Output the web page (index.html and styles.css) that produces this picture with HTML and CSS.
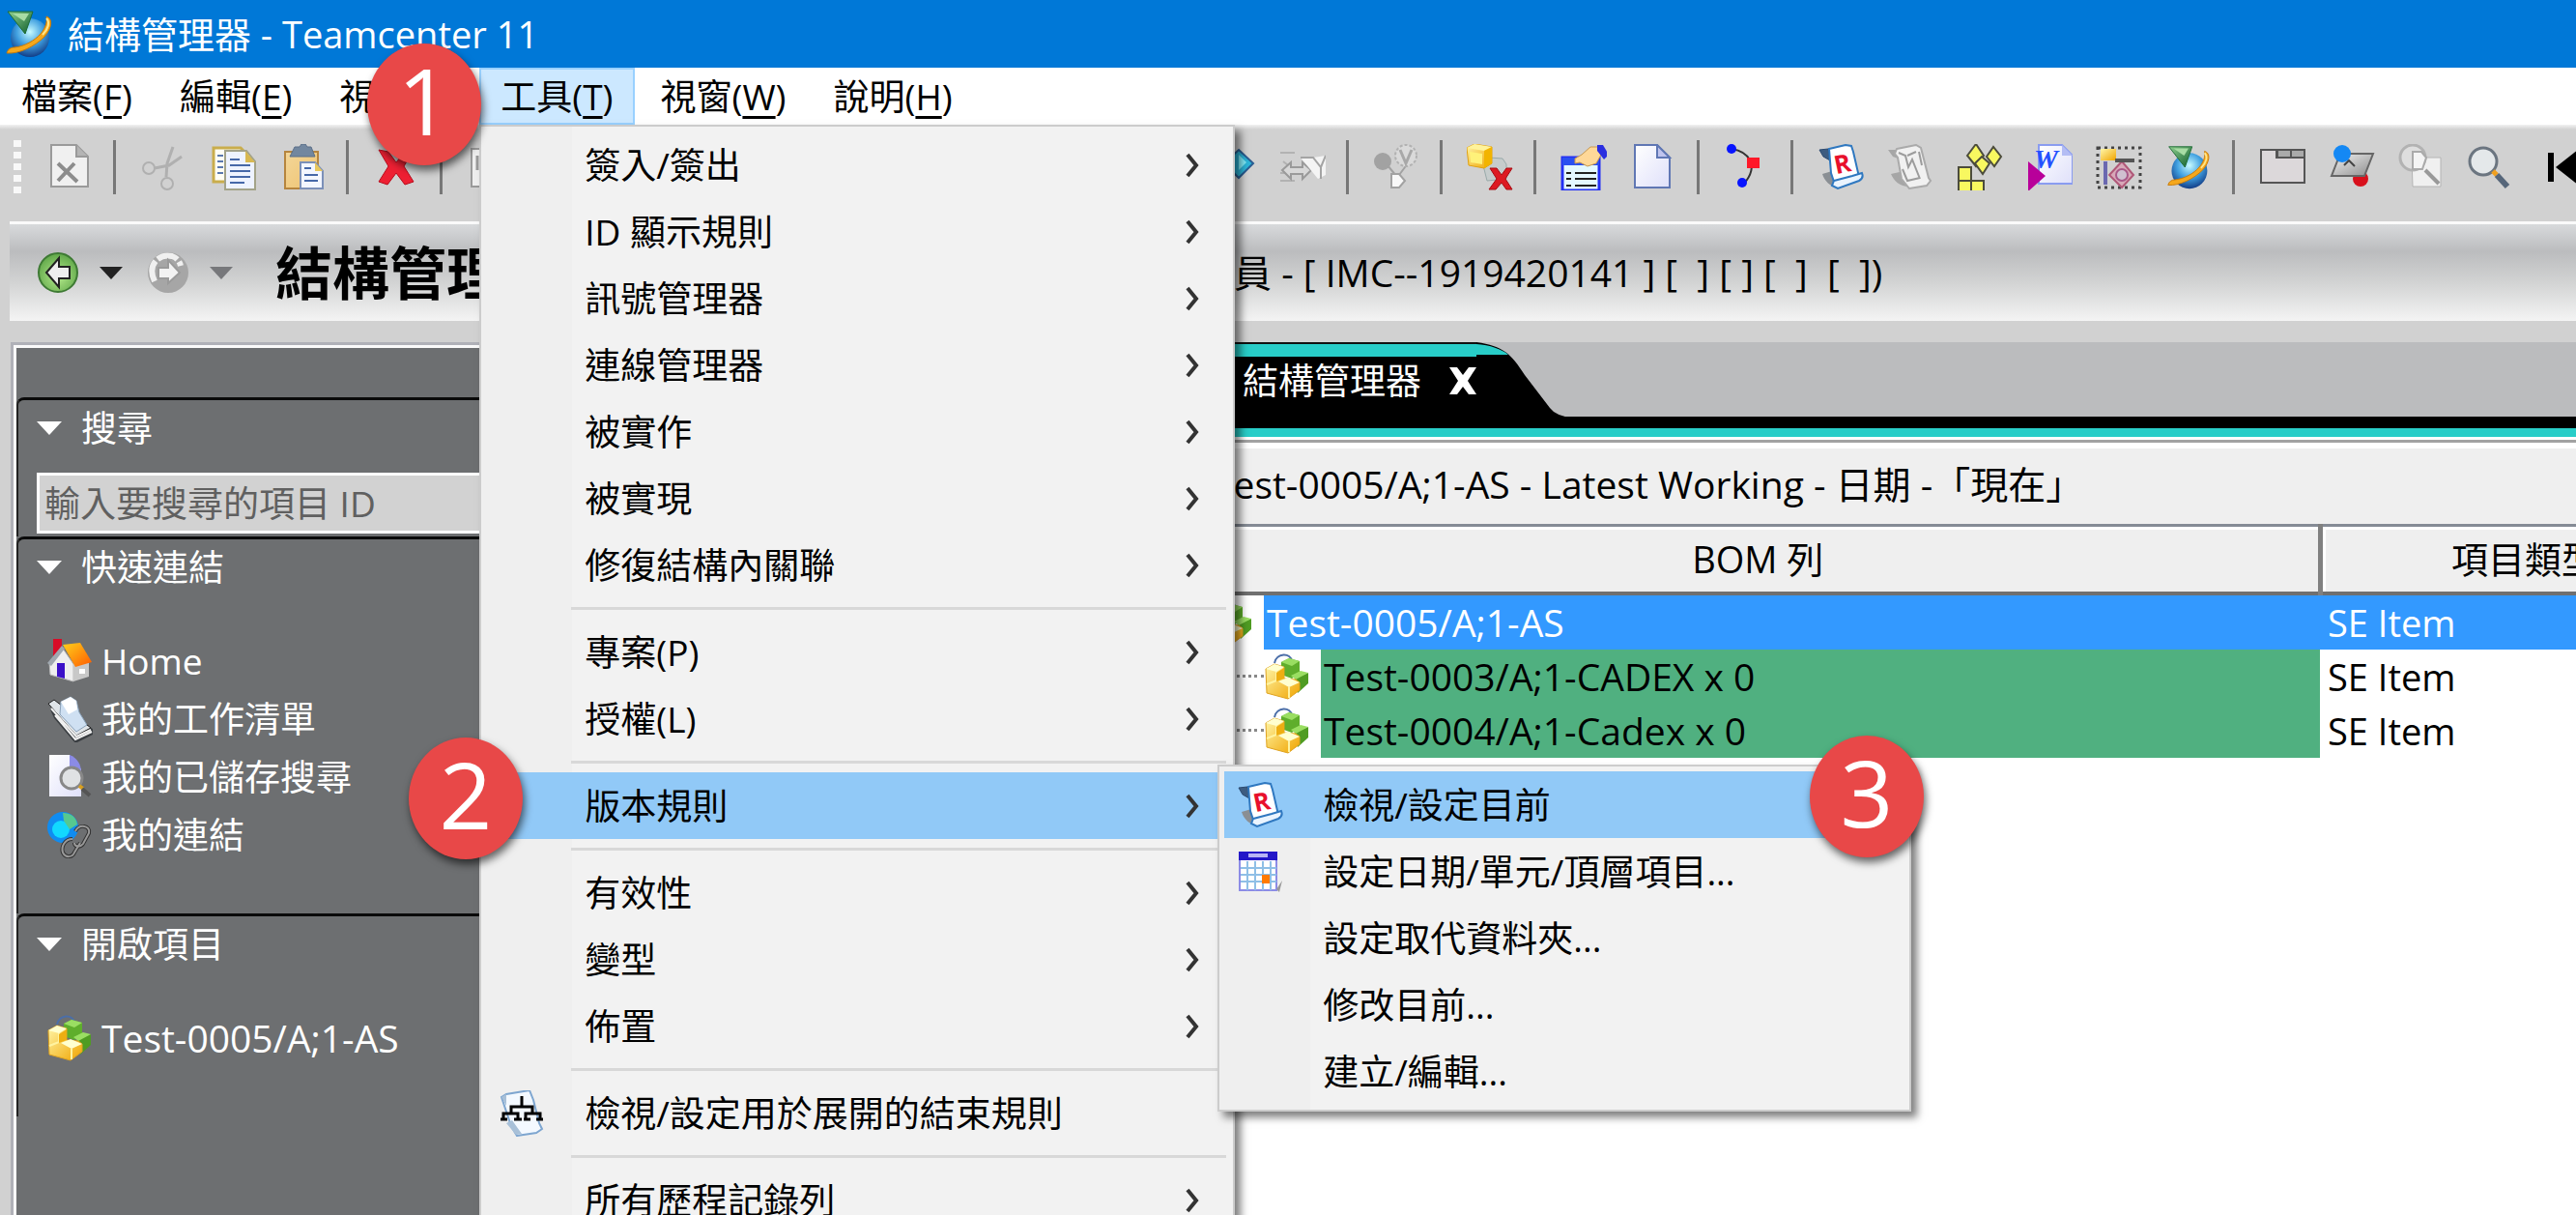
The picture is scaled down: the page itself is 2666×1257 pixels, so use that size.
FILE: index.html
```html
<!DOCTYPE html>
<html lang="zh-Hant">
<head>
  <meta charset="UTF-8">
  <meta name="viewport" content="width=device-width, initial-scale=1.0">
  <title>結構管理器 - Teamcenter 11</title>
  <link rel="stylesheet" href="styles.css">
</head>
<body>

  <!-- Shared icons -->
  <svg class="sprite" aria-hidden="true">
    <defs>
      <linearGradient id="gold" x1="0" y1="0" x2="1" y2="1">
        <stop offset="0" stop-color="#fff6a8"/>
        <stop offset="1" stop-color="#f0a400"/>
      </linearGradient>
      <linearGradient id="paper" x1="0" y1="0" x2="1" y2="1">
        <stop offset="0" stop-color="#ffffff"/>
        <stop offset="1" stop-color="#dfe0fa"/>
      </linearGradient>
      <linearGradient id="steel" x1="0" y1="0" x2="1" y2="1">
        <stop offset="0" stop-color="#f4f4f4"/>
        <stop offset="1" stop-color="#8c8c8c"/>
      </linearGradient>
      <linearGradient id="leaf" x1="0" y1="0" x2="1" y2="1">
        <stop offset="0" stop-color="#8fd08f"/>
        <stop offset="1" stop-color="#0d5c2a"/>
      </linearGradient>
      <linearGradient id="roof" x1="0" y1="0" x2="1" y2="1">
        <stop offset="0" stop-color="#ffd21c"/>
        <stop offset="1" stop-color="#ff5a00"/>
      </linearGradient>
      <radialGradient id="globe" cx="0.5" cy="0.35" r="0.7">
        <stop offset="0" stop-color="#c8fbff"/>
        <stop offset="0.5" stop-color="#3f9fe0"/>
        <stop offset="1" stop-color="#0b2d78"/>
      </radialGradient>
      <radialGradient id="green" cx="0.5" cy="0.6" r="0.6">
        <stop offset="0" stop-color="#b4ea8c"/>
        <stop offset="1" stop-color="#5fa648"/>
      </radialGradient>
    </defs>

    <symbol id="logo" viewBox="0 0 52 52">
      <circle cx="27" cy="30" r="20" fill="url(#globe)"/>
      <path d="M44 8c7 2 6 12-2 21C32 39 16 47 3 46c1-4 4-6 8-6 10-1 21-7 27-14 5-6 7-12 6-18z" fill="#f5a81c" stroke="#c87a08"/>
      <path d="M44 10c4 4 2 11-4 17" fill="none" stroke="#ffe68a" stroke-width="2"/>
      <path d="M4 3h26l-8 23z" fill="url(#leaf)" stroke="#1c6b34"/>
      <path d="M9 5h17l-5 8z" fill="#a8dca4"/>
    </symbol>

    <symbol id="rule" viewBox="0 0 48 48">
      <path d="M5 31l10-3 7 18c-9-2-15-8-17-15z" fill="#8a8f94"/>
      <path d="M2 6l9-1 2 12-7-4z" fill="#3d5c80" stroke="#2b4a70"/>
      <path d="M12 5l17-4 6 1 2 6 6 26-25 8-4-12z" fill="#fff" stroke="#2f78c0" stroke-width="2"/>
      <path d="M17 38l19-5 10-3c2 5-1 7-3 8l-22 8-6-3z" fill="#eaf4ff" stroke="#2f78c0" stroke-width="2"/>
      <text x="17" y="30" class="rule-letter" transform="rotate(-12 24 20)">R</text>
    </symbol>

    <symbol id="assembly" viewBox="0 0 48 48">
      <path d="M11 10c2-11 17-11 18-2" fill="none" stroke="#4b6ea8" stroke-width="2"/>
      <path d="M18 9l8-4 11 3v12l-8 6-11-4z" fill="#5fae2c"/>
      <path d="M18 9l8-4 11 3-8 5z" fill="#9ade62"/>
      <path d="M32 26l14-6v11l-11 10z" fill="#4f9c22"/>
      <path d="M28 23l10-5 8 2-13 7z" fill="#9ade62"/>
      <path d="M2 16l9-5 10 3v12l12 1 4 3v8l-12 9-22-6z" fill="url(#gold)" stroke="#dfa320"/>
      <path d="M2 16l9-5 10 3-8 5zM15 29l10-4 12 5-11 5z" fill="#ffffcf"/>
      <path d="M13 19v9l-10 4M26 35v11" fill="none" stroke="#fff3a0" stroke-width="2"/>
      <path d="M21 15v11l-8 3v-9z" fill="#eeae12"/>
    </symbol>

    <symbol id="arrow" viewBox="0 0 20 28">
      <path d="M4 3l9 11-9 11" fill="none" stroke="#333" stroke-width="4"/>
    </symbol>
  </svg>

  <header class="title-bar">
    <svg class="logo"><use href="#logo"/></svg>
    <span>結構管理器 - Teamcenter 11</span>
  </header>

  <nav class="menu-bar">
    <button type="button" class="menu-button">檔案(<u>F</u>)</button>
    <button type="button" class="menu-button">編輯(<u>E</u>)</button>
    <button type="button" class="menu-button">視圖(<u>V</u>)</button>
    <div class="menu-holder">
      <button type="button" class="menu-button open">工具(<u>T</u>)</button>
      <div class="menu tools-menu">
        <button type="button" class="item">簽入/簽出<svg class="arrow"><use href="#arrow"/></svg></button>
        <button type="button" class="item">ID 顯示規則<svg class="arrow"><use href="#arrow"/></svg></button>
        <button type="button" class="item">訊號管理器<svg class="arrow"><use href="#arrow"/></svg></button>
        <button type="button" class="item">連線管理器<svg class="arrow"><use href="#arrow"/></svg></button>
        <button type="button" class="item">被實作<svg class="arrow"><use href="#arrow"/></svg></button>
        <button type="button" class="item">被實現<svg class="arrow"><use href="#arrow"/></svg></button>
        <button type="button" class="item">修復結構內關聯<svg class="arrow"><use href="#arrow"/></svg></button>
        <hr>
        <button type="button" class="item">專案(P)<svg class="arrow"><use href="#arrow"/></svg></button>
        <button type="button" class="item">授權(L)<svg class="arrow"><use href="#arrow"/></svg></button>
        <hr>
        <div class="item-holder">
          <button type="button" class="item selected">版本規則<svg class="arrow"><use href="#arrow"/></svg></button>
          <div class="menu sub-menu">
            <button type="button" class="item selected"><svg class="item-icon"><use href="#rule"/></svg>檢視/設定目前</button>
            <button type="button" class="item">
              <svg class="item-icon" viewBox="0 0 48 48">
                <rect x="3" y="4" width="38" height="39" fill="#fff" stroke="#8c8ce6" stroke-width="2"/>
                <path d="M2 3h40v9H2z" fill="#2418c8"/>
                <path d="M12 5h20v4H12z" fill="#b8b4f4"/>
                <path d="M11 13v30M19 13v30M27 13v30M35 13v30M4 20h37M4 27h37M4 34h37" stroke="#8fbfe6" stroke-width="2"/>
                <path d="M26 27h8v9h-8z" fill="#ff7a00"/>
                <path d="M41 42l6-9-3 12z" fill="#999"/>
              </svg>設定日期/單元/頂層項目...</button>
            <button type="button" class="item">設定取代資料夾...</button>
            <button type="button" class="item">修改目前...</button>
            <button type="button" class="item">建立/編輯...</button>
          </div>
        </div>
        <hr>
        <button type="button" class="item">有效性<svg class="arrow"><use href="#arrow"/></svg></button>
        <button type="button" class="item">變型<svg class="arrow"><use href="#arrow"/></svg></button>
        <button type="button" class="item">佈置<svg class="arrow"><use href="#arrow"/></svg></button>
        <hr>
        <button type="button" class="item">
          <svg class="item-icon" viewBox="0 0 48 48">
            <path d="M3 7l5-3 24-4 4 10 6 24 3 6-6 4-20 3-6-10z" fill="#f4f9ff" stroke="#7ea6d0" stroke-width="2"/>
            <path d="M3 7l5-3v12zM8 34l10 12 6-1-10-14z" fill="#a8c0d8"/>
            <path d="M24 6v10M13 24v-7h22v7M5 31v-7h15v7M28 31v-7h15v7" fill="none" stroke="#000" stroke-width="3"/>
            <path d="M2 30h7M16 30h8M26 30h7M39 30h7" stroke="#000" stroke-width="3"/>
          </svg>檢視/設定用於展開的結束規則</button>
        <hr>
        <button type="button" class="item">所有歷程記錄列<svg class="arrow"><use href="#arrow"/></svg></button>
      </div>
    </div>
    <button type="button" class="menu-button">視窗(<u>W</u>)</button>
    <button type="button" class="menu-button">說明(<u>H</u>)</button>
  </nav>

  <div class="toolbar split">
    <div class="tools">
      <span class="grip"></span>
      <button type="button" class="tool" aria-label="關閉">
        <svg viewBox="0 0 48 48"><path d="M5 1h26l12 12v31H5z" fill="#f0f0f0" stroke="#9a9a9a" stroke-width="2"/><path d="M31 1v12h12" fill="#b4b4b4" stroke="#9a9a9a" stroke-width="2"/><path d="M12 20l20 19M29 20L12 38" stroke="#8c8c8c" stroke-width="4"/></svg>
      </button>
      <span class="divider"></span>
      <button type="button" class="tool" aria-label="剪下">
        <svg viewBox="0 0 48 48" fill="none" stroke="#b0b0b0"><circle cx="9" cy="25" r="6" stroke-width="2"/><circle cx="28" cy="41" r="6" stroke-width="2"/><path d="M15 25l15-3 13-9M27 34l1-14 6-17" stroke-width="3"/></svg>
      </button>
      <button type="button" class="tool" aria-label="複製">
        <svg viewBox="0 0 48 48"><path d="M4 4h28l4 4v31H4z" fill="#fffef4" stroke="#c9ad4c" stroke-width="3"/><path d="M8 12h6M8 18h6M8 24h6M8 30h6" stroke="#5a78ae" stroke-width="2"/><path d="M16 7h22l9 11v29H16z" fill="#eef3ff" stroke="#a3a389" stroke-width="2"/><path d="M37 7v12h10z" fill="#d8b850"/><path d="M21 16h10M21 22h21M21 28h21M21 34h21M21 40h15" stroke="#4668a8" stroke-width="2"/></svg>
      </button>
      <button type="button" class="tool" aria-label="貼上">
        <svg viewBox="0 0 48 48"><path d="M6 8h34v38H6z" fill="url(#gold)" opacity="0.6"/><path d="M6 8h34v38H6z" fill="#f6cb84" fill-opacity="0.6" stroke="#b6853e" stroke-width="2"/><path d="M11 13l5-10h5l2-3h4l2 3h4l4 10z" fill="#72879f" stroke="#5b6f88"/><path d="M22 19h15l8 9v18H22z" fill="#f3f6ff" stroke="#7c90b8" stroke-width="2"/><path d="M37 19v9h8z" fill="#e9c75c"/><path d="M26 25h7M26 32h14M26 38h14" stroke="#4668a8" stroke-width="2"/></svg>
      </button>
      <span class="divider"></span>
      <button type="button" class="tool" aria-label="刪除">
        <svg viewBox="0 0 48 48"><path d="M6 6l10 2 8 11 9-11 9-2-10 17 10 16-9 3-9-12-9 12-9-3 10-16z" fill="#ee2033" stroke="#b80c1c"/></svg>
      </button>
      <span class="divider"></span>
      <button type="button" class="tool" aria-label="新增">
        <svg viewBox="0 0 48 48"><path d="M5 5h26l10 10v29H5z" fill="#efefef" stroke="#9a9a9a" stroke-width="2"/><path d="M11 12v15" stroke="#9a9a9a" stroke-width="3"/></svg>
      </button>
    </div>
    <div class="tools">
      <button type="button" class="tool" aria-label="前往">
        <svg viewBox="0 0 48 48"><path d="M30 6l15 14-15 15-15-15z" fill="#2cb4d8" stroke="#2a5d92" stroke-width="2"/><path d="M30 11l8 8-8 8z" fill="#7fe9f7"/></svg>
      </button>
      <button type="button" class="tool" aria-label="傳送">
        <svg viewBox="0 0 48 48"><path d="M1 9h15M1 38h15M4 18l5 4M1 30h5" stroke="#b2b2b2" stroke-width="2"/><path d="M3 27l9-8v5h12v-5l9 8-9 9v-5H12v5z" fill="#d8d8d8" stroke="#9a9a9a" stroke-width="2"/><path d="M22 14h13l13-2v20l-8 4z" fill="#f4f4f4"/><path d="M22 14h13l8 10 5-12M43 24v12" fill="none" stroke="#a4a4a4" stroke-width="2"/></svg>
      </button>
      <span class="divider"></span>
      <button type="button" class="tool" aria-label="變型條件">
        <svg viewBox="0 0 48 48"><circle cx="10" cy="18" r="9" fill="#a2a2a2"/><path d="M15 22l9 11M36 20l-9 12" stroke="#a2a2a2" stroke-width="2"/><circle cx="34" cy="12" r="11" fill="#dadada" stroke="#b2b2b2" stroke-width="2" stroke-dasharray="3 2"/><path d="M28 6l6 14 6-14" fill="none" stroke="#a8a8a8" stroke-width="3"/><path d="M19 31h8l6 7-6 7h-8z" fill="#f8f8f8" stroke="#a2a2a2" stroke-width="2"/></svg>
      </button>
      <span class="divider"></span>
      <button type="button" class="tool" aria-label="移除項目">
        <svg viewBox="0 0 48 48"><path d="M17 22l6-8 14 1 4 6v15l-20 2z" fill="#c6cccc" stroke="#9aa"/><path d="M0 4l8-4 18 3v17l-8 5L2 22z" fill="url(#gold)" stroke="#e0a010"/><path d="M0 4l8-4 18 3-8 4z" fill="#fff39a"/><path d="M3 8l13 2v11L4 19z" fill="#fff27a"/><path d="M18 7v18l8-5V3z" fill="#f2b400"/><path d="M24 25h7l5 7 5-7h6l-7 11 7 11h-6l-5-7-6 7h-7l8-11z" fill="#dd1a22" stroke="#a80c12"/></svg>
      </button>
      <span class="divider"></span>
      <button type="button" class="tool" aria-label="內容">
        <svg viewBox="0 0 48 48"><path d="M2 14h38v34H2z" fill="#e4f8ff" stroke="#2430f4" stroke-width="3"/><path d="M2 14h38v8H2z" fill="#2a50f0"/><path d="M6 30h5M6 36h5M6 43h5M15 30h22M15 36h22M15 43h22" stroke="#222" stroke-width="2"/><path d="M15 15l7-4 9-8h8l3 8-5 9-9 3-8-4-5 1z" fill="#ffd898" stroke="#c89850"/><path d="M38 1h6l6 10-5 5-7-9z" fill="#2a2ee0"/></svg>
      </button>
      <button type="button" class="tool" aria-label="新文件">
        <svg viewBox="0 0 48 48"><path d="M5 1h23l13 13v31H5z" fill="url(#paper)" stroke="#6077b4" stroke-width="2"/><path d="M28 1v13h13z" fill="#c0c4ee" stroke="#6077b4" stroke-width="2"/></svg>
      </button>
      <span class="divider"></span>
      <button type="button" class="tool" aria-label="路徑">
        <svg viewBox="0 0 48 48"><path d="M8 5c18 3 29 17 13 36" fill="none" stroke="#333" stroke-width="2"/><circle cx="8" cy="5" r="5" fill="#0814ff"/><circle cx="19" cy="40" r="5" fill="#0814ff"/><path d="M24 14h13v11H24z" fill="#ff1828"/></svg>
      </button>
      <span class="divider"></span>
      <button type="button" class="tool" aria-label="版本規則"><svg><use href="#rule"/></svg></button>
      <button type="button" class="tool" aria-label="清除規則">
        <svg viewBox="0 0 48 48"><path d="M4 31l9-2 10 15c-10 0-16-6-19-13zM1 6h9l4 10-8-3z" fill="#a6a6a6"/><path d="M10 5l20-4 5 3 8 31 2 3-4 5-18 3-8-10-4-22-3-4z" fill="#f1f1f1" stroke="#aaa" stroke-width="2"/><path d="M12 9l7 3 3 12 4-8 8 20M30 8l-9 4M33 8l3 14M16 26l5 12 13-3" fill="none" stroke="#9c9c9c" stroke-width="2"/></svg>
      </button>
      <button type="button" class="tool" aria-label="封裝">
        <svg viewBox="0 0 48 48" fill="#f8f860" stroke="#4c4c3c" stroke-width="2"><path d="M11 12l9-12 8 12-8 11z"/><path d="M31 13l7-10 8 10-7 10z"/><path d="M19 20l7-7 8 7-7 11z"/><path d="M2 24h13v14H2zM2 38h13v11H2zM15 38h13v11H15z"/></svg>
      </button>
      <button type="button" class="tool" aria-label="匯出至 Word">
        <svg viewBox="0 0 48 48"><path d="M13 1h24l11 11v29H13z" fill="url(#paper)" stroke="#8a9cf0" stroke-width="2"/><path d="M37 1v11h11z" fill="#b4bdf4"/><text x="8" y="25" class="word-letter">W</text><path d="M2 18l18 15L2 49z" fill="#b8009a"/></svg>
      </button>
      <button type="button" class="tool" aria-label="選取範圍">
        <svg viewBox="0 0 48 48"><path d="M2 4h44v41H2z" fill="none" stroke="#444" stroke-width="3" stroke-dasharray="3 4"/><path d="M10 18v24" stroke="#6a68b0" stroke-width="4"/><path d="M27 18l12 14-12 13-13-13z" fill="#d8a8b8" stroke="#b05878" stroke-width="2"/><circle cx="27" cy="32" r="6" fill="#d0c0d0" stroke="#a85888" stroke-width="2"/><path d="M5 5h16v12H5z" fill="url(#gold)"/><path d="M20 17h20" stroke="#555" stroke-width="4"/></svg>
      </button>
      <button type="button" class="tool" aria-label="Teamcenter"><svg><use href="#logo"/></svg></button>
      <span class="divider"></span>
      <button type="button" class="tool" aria-label="資料夾">
        <svg viewBox="0 0 48 48"><path d="M2 6h16v8h29v26H2z" fill="#dcd8da" stroke="#555" stroke-width="2"/><path d="M19 6h28v8H19zM33 6v8" fill="#aaa" stroke="#555" stroke-width="2"/></svg>
      </button>
      <button type="button" class="tool" aria-label="平面">
        <svg viewBox="0 0 48 48"><circle cx="33" cy="36" r="8" fill="#d8101c"/><path d="M12 10h34l-9 23H3z" fill="url(#steel)" stroke="#666" stroke-width="2"/><path d="M16 22l5-5 6 6" fill="none" stroke="#444" stroke-width="2"/><circle cx="14" cy="10" r="9" fill="#1488f4"/></svg>
      </button>
      <button type="button" class="tool" aria-label="尋找元件">
        <svg viewBox="0 0 48 48"><path d="M14 14h30v30H15z" fill="#f0f0f0" stroke="#b4b4b4"/><circle cx="15" cy="14" r="13" fill="#dedede" stroke="#b2b2b2" stroke-width="3"/><path d="M15 8h9l5 6-4 12H15z" fill="#f4f4f4" stroke="#aaa" stroke-width="2"/><path d="M28 27l14 14" stroke="#999" stroke-width="4"/></svg>
      </button>
      <button type="button" class="tool" aria-label="尋找">
        <svg viewBox="0 0 48 48"><circle cx="16" cy="18" r="14" fill="#e4e8ea" stroke="#6b7580" stroke-width="3"/><path d="M26 28l4 4" stroke="#f0a020" stroke-width="5"/><path d="M30 32l11 12" stroke="#56667a" stroke-width="6"/></svg>
      </button>
      <button type="button" class="tool" aria-label="第一個">
        <svg viewBox="0 0 48 48"><path d="M11 9h6v30h-6z"/><path d="M42 6v36L19 24z"/></svg>
      </button>
    </div>
  </div>

  <div class="page-header split">
    <div class="history">
      <button type="button" class="history-button" aria-label="上一步">
        <svg viewBox="0 0 44 44"><circle cx="22" cy="22" r="20" fill="url(#green)" stroke="#3e7a34" stroke-width="2"/><path d="M10 22l13-15v9h11v12H23v9z" fill="#eee" stroke="#222" stroke-width="2"/></svg>
      </button>
      <button type="button" class="drop" aria-label="上一步清單"></button>
      <button type="button" class="history-button" aria-label="下一步">
        <svg viewBox="0 0 44 44"><circle cx="22" cy="22" r="21" fill="#a6a6a6"/><path d="M8 31C0 14 12 2 26 5c6 2 8 6 9 10" fill="none" stroke="#f0f0f0" stroke-width="6" stroke-dasharray="22 3"/><path d="M12 17h10V9l12 13-12 11v-5H12z" fill="#f2f2f2" stroke="#9a9a9a" stroke-width="2"/></svg>
      </button>
      <button type="button" class="drop off" aria-label="下一步清單"></button>
      <h1>結構管理器</h1>
    </div>
    <p class="session">員 - [ IMC--1919420141 ] [&nbsp; ] [ ] [&nbsp; ]&nbsp; [&nbsp; ])</p>
  </div>

  <div class="workspace split">
    <aside class="sidebar">
      <section class="panel">
        <h2>搜尋</h2>
        <input type="text" class="search" aria-label="搜尋" placeholder="輸入要搜尋的項目 ID">
      </section>
      <section class="panel links">
        <h2>快速連結</h2>
        <a href="#">
          <svg viewBox="0 0 48 48"><path d="M7 1h9v18H7z" fill="#d80c28"/><path d="M3 25l14-14 11 16v18L4 38z" fill="#eee" stroke="#bbb"/><path d="M28 26l16-2v16l-16 5z" fill="#c8c8c8"/><path d="M17 7l18-2 12 20-17 5z" fill="url(#roof)"/><path d="M1 26l15-18 3 3L5 29z" fill="#a0a8b0"/><path d="M11 26h8v16l-8-2z" fill="#3b10c8"/><path d="M34 32h6v5h-6z" fill="#fff"/></svg>
          Home</a>
        <a href="#">
          <svg viewBox="0 0 48 48"><path d="M4 14l12-5 33 26-1 5-18 9L8 23z" fill="#3a3e42"/><path d="M2 8l6-4 38 29-15 8z" fill="#dfe4e8" stroke="#222"/><path d="M15 6l10-5 6 4 3 12 8 13-11 7-17-18z" fill="#cfe0f2" stroke="#8aa2ba"/><path d="M15 6l10-5 6 4 1 9-9 5z" fill="#fff"/><path d="M5 13l26 29 15-7M9 20l21 25 17-8" fill="none" stroke="#f0f0f0" stroke-width="2"/></svg>
          我的工作清單</a>
        <a href="#">
          <svg viewBox="0 0 48 48"><path d="M3 1h21l12 15v28H3z" fill="url(#paper)"/><path d="M24 1c8 3 12 10 12 18L24 13z" fill="#8b8be6"/><circle cx="26" cy="25" r="11" fill="#e0e2e4" stroke="#888" stroke-width="3"/><path d="M34 33l4 3" stroke="#d8a020" stroke-width="4"/><path d="M37 36l8 7" stroke="#555" stroke-width="4"/></svg>
          我的已儲存搜尋</a>
        <a href="#">
          <svg viewBox="0 0 48 48"><circle cx="17" cy="16" r="16" fill="#108cf0"/><circle cx="15" cy="18" r="9" fill="#12d8ff"/><path d="M17 1c8 0 14 4 15 12l-8 5-6-9z" fill="#56c890"/><g fill="none" stroke="#333" stroke-width="4"><path d="M30 20c4-8 16-6 14 2l-6 11c-3 4-9 3-9-1"/><path d="M27 28c-8 0-12 8-10 14 3 6 10 5 12 0l6-10"/></g><g fill="none" stroke="#999" stroke-width="2"><path d="M30 20c4-8 16-6 14 2l-6 11c-3 4-9 3-9-1"/><path d="M27 28c-8 0-12 8-10 14 3 6 10 5 12 0l6-10"/></g></svg>
          我的連結</a>
      </section>
      <section class="panel links open-items">
        <h2>開啟項目</h2>
        <a href="#"><svg><use href="#assembly"/></svg>Test-0005/A;1-AS</a>
      </section>
    </aside>

    <main class="editor">
      <div class="tabs">
        <div class="tab">
          <span>結構管理器</span>
          <button type="button" class="close" aria-label="關閉">
            <svg viewBox="0 0 28 28"><path d="M0 0h8l6 8 6-8h8l-9 14 9 14h-8l-6-8-6 8H0l9-14z" fill="#fff"/></svg>
          </button>
        </div>
        <svg class="tab-edge" viewBox="0 0 98 78">
          <path d="M0 0c28 4 36 12 50 34l26 34q6 8 22 10H0z"/>
          <path d="M0 2c14 1 26 5 33 11H0z" fill="#28cdc8"/>
        </svg>
      </div>
      <p class="revision">Test-0005/A;1-AS - Latest Working - 日期 -「現在」</p>
      <table class="bom">
        <colgroup>
          <col class="col-line">
          <col class="col-type">
        </colgroup>
        <thead>
          <tr>
            <th>BOM 列</th>
            <th>項目類型</th>
          </tr>
        </thead>
        <tbody>
          <tr class="current">
            <td><div class="node"><svg><use href="#assembly"/></svg><span>Test-0005/A;1-AS</span></div></td>
            <td>SE Item</td>
          </tr>
          <tr>
            <td><div class="node child"><svg><use href="#assembly"/></svg><span>Test-0003/A;1-CADEX x 0</span></div></td>
            <td>SE Item</td>
          </tr>
          <tr>
            <td><div class="node child"><svg><use href="#assembly"/></svg><span>Test-0004/A;1-Cadex x 0</span></div></td>
            <td>SE Item</td>
          </tr>
        </tbody>
      </table>
    </main>
  </div>

  <!-- Step markers -->
  <div class="step step-1">1</div>
  <div class="step step-2">2</div>
  <div class="step step-3">3</div>

</body>
</html>
```
FILE: styles.css
```css
/* General Styles */
* {
  box-sizing: border-box;
}

body {
  margin: 0;
  height: 100vh;
  display: flex;
  flex-direction: column;
  position: relative;
  overflow: hidden;
  background-color: #d1d1d1;
  color: #000;
  font-family: "Open Sans", "Noto Sans CJK TC", sans-serif;
  font-size: 37px;
  line-height: 48px;
}

button, input {
  font: inherit;
  color: inherit;
}

button {
  border: none;
  padding: 0;
  background: none;
  white-space: nowrap;
}

h1, h2, p {
  margin: 0;
}

svg {
  display: block;
  flex: none;
  width: 48px;
  height: 48px;
}

.sprite {
  position: absolute;
  width: 0;
  height: 0;
}

.split {
  display: grid;
  grid-template-columns: 1240px minmax(0, 1fr);
}

/* Title bar */
.title-bar {
  display: flex;
  align-items: center;
  gap: 14px;
  height: 70px;
  flex: none;
  padding: 0 4px;
  background-color: #0078d7;
  color: #fff;
  font-size: 38px;
}

.title-bar .logo {
  width: 52px;
  height: 52px;
}

/* Menu bar */
.menu-bar {
  display: flex;
  flex: none;
  gap: 5px;
  height: 59px;
  background-color: #fff;
}

.menu-button {
  height: 59px;
  padding: 0 22px;
}

.menu-button.open {
  background-color: #cce8ff;
  border: 2px solid #99d1ff;
  padding: 0 20px;
}

.menu-button u {
  text-decoration-thickness: 3px;
  text-underline-offset: 6px;
}

.menu-holder, .item-holder {
  position: relative;
}

.menu {
  position: absolute;
  z-index: 2;
  padding: 5px;
  border: 2px solid #ccc;
  background: linear-gradient(to right, #efefef 94px, #f2f2f2 94px);
  box-shadow: 6px 6px 8px rgba(0, 0, 0, 0.5);
}

.tools-menu {
  top: 100%;
  left: 0;
  width: 782px;
}

.sub-menu {
  top: -8px;
  left: 757px;
  width: 718px;
}

.item {
  display: flex;
  align-items: center;
  position: relative;
  width: 100%;
  height: 69px;
  padding: 0 26px 0 102px;
  text-align: left;
}

.item.selected {
  background-color: #91c9f7;
}

.item-icon {
  position: absolute;
  left: 13px;
}

.arrow {
  width: 20px;
  height: 28px;
  margin-left: auto;
}

.menu hr {
  height: 3px;
  margin: 9px 2px 9px 88px;
  border: none;
  background-color: #d8d8d8;
}

.rule-letter {
  font-size: 26px;
  font-weight: 700;
  fill: #e8102c;
}

.word-letter {
  font-family: "Liberation Serif", serif;
  font-size: 28px;
  font-style: italic;
  font-weight: 700;
  fill: #2450ff;
}

/* Toolbar */
.toolbar {
  flex: none;
  height: 100px;
  padding-top: 16px;
  background: linear-gradient(#f2f2f2, #d1d1d1 5px);
}

.tools {
  display: flex;
  align-items: center;
  height: 56px;
  overflow: hidden;
}

.tool {
  display: flex;
  justify-content: center;
  flex: none;
  width: 72px;
}

.divider {
  flex: none;
  width: 3px;
  height: 56px;
  margin: 0 13px 0 9px;
  background-color: #777;
}

.grip {
  flex: none;
  width: 8px;
  height: 56px;
  margin: 0 14px;
  background: repeating-linear-gradient(#f8f8f8 0 7px, #d1d1d1 7px 12px);
}

/* Page header */
.page-header {
  flex: none;
  align-items: center;
  height: 103px;
  margin-left: 10px;
  border-top: 3px solid #fafafa;
  background: linear-gradient(#d8dadc, #bbbcbe 28%, #d2d3d3 60%, #f4f4f4);
}

.page-header.split {
  grid-template-columns: 1230px minmax(0, 1fr);
}

.history {
  display: flex;
  align-items: center;
  padding-left: 28px;
}

.history h1 {
  font-size: 59px;
  font-weight: 700;
  line-height: 72px;
  padding-left: 44px;
}

.history-button svg {
  width: 44px;
  height: 44px;
}

.drop {
  width: 0;
  height: 0;
  margin: 0 25px 0 21px;
  border-left: 12px solid transparent;
  border-right: 12px solid transparent;
  border-top: 13px solid #222;
}

.drop.off {
  margin-right: 0;
  border-top-color: #77787b;
}

.session {
  padding-left: 37px;
  font-size: 39px;
  white-space: nowrap;
}

/* Workspace */
.workspace {
  flex: 1;
  min-height: 0;
  padding-top: 22px;
}

.sidebar {
  margin-left: 11px;
  border: 3px solid #b0b1b8;
  border-bottom: none;
  box-shadow: inset 3px 3px #fafafa;
  padding: 54px 10px 0 3px;
  background-color: #6d6f71;
  color: #fff;
}

.panel {
  border-top: 3px solid #0a0a0a;
  border-left: 2px solid #222;
  border-top-left-radius: 8px;
  padding: 0 0 3px 19px;
}

.panel h2 {
  display: flex;
  align-items: center;
  gap: 20px;
  height: 58px;
  font-size: 37px;
  font-weight: 400;
}

.panel h2::before {
  content: "";
  border-left: 13px solid transparent;
  border-right: 13px solid transparent;
  border-top: 14px solid #fff;
}

.search {
  display: block;
  width: 100%;
  height: 63px;
  margin-top: 17px;
  padding: 0 5px;
  border: 3px solid #fff;
  background-color: #d2d2d2;
}

.search::placeholder {
  color: #606060;
  opacity: 1;
}

.links {
  padding-bottom: 51px;
}

.links h2 {
  margin-bottom: 38px;
}

.links a {
  display: flex;
  align-items: center;
  gap: 9px;
  height: 60px;
  padding-left: 10px;
  color: #fff;
  text-decoration: none;
}

.open-items a {
  font-size: 39px;
}

/* Editor */
.editor {
  overflow: hidden;
  background-color: #fff;
}

.tabs {
  display: flex;
  height: 98px;
  background-color: #bbbcbe;
  border-bottom: 9px solid #28cdc8;
  box-shadow: inset 0 -12px #000;
}

.tab {
  display: flex;
  align-items: center;
  gap: 29px;
  height: 78px;
  padding-left: 46px;
  border-top: 2px solid #111;
  background: linear-gradient(#28cdc8 13px, #000 13px);
  color: #fff;
}

.close svg {
  width: 28px;
  height: 28px;
}

.tab-edge {
  width: 98px;
  height: 78px;
}

.revision {
  height: 87px;
  padding: 19px 15px 0;
  border-top: 3px solid #a2a2a2;
  box-shadow: inset 0 6px #fff;
  margin-top: 3px;
  background-color: #efefef;
  font-size: 39px;
  white-space: nowrap;
}

.bom {
  width: 1585px;
  table-layout: fixed;
  border-collapse: collapse;
  font-size: 39px;
}

.col-line {
  width: 1161px;
}

.col-type {
  width: 424px;
}

.bom th {
  height: 70px;
  padding: 0;
  background-color: #efefef;
  border-top: 3px solid #858b95;
  border-bottom: 4px solid #707070;
  border-right: 5px solid #808080;
  box-shadow: inset 3px 3px #fff;
  font-size: 38px;
  font-weight: 400;
}

.bom td {
  height: 56px;
  padding: 0 8px;
}

.bom td:first-child {
  padding: 0;
}

.bom td:last-child {
  font-size: 38px;
}

.node {
  display: flex;
  align-items: center;
  height: 56px;
  padding-left: 9px;
}

.node span {
  flex: 1;
  height: 56px;
  margin-left: 11px;
  padding: 4px 3px;
}

.node.child::before {
  content: "";
  width: 59px;
  border-top: 3px dotted #888;
}

.node.child span {
  background-color: #50b080;
}

.current td:last-child, .current span {
  background-color: #3399ff;
  color: #fff;
}

/* Step markers */
.step {
  position: absolute;
  z-index: 3;
  display: flex;
  align-items: center;
  justify-content: center;
  width: 118px;
  height: 126px;
  padding-bottom: 10px;
  border-radius: 50%;
  background-color: #e84848;
  box-shadow: 2px 5px 8px rgba(0, 0, 0, 0.6);
  color: #fff;
  font-size: 96px;
}

.step-1 {
  top: 45px;
  left: 380px;
}

.step-2 {
  top: 763px;
  left: 423px;
}

.step-3 {
  top: 761px;
  left: 1873px;
}
```
